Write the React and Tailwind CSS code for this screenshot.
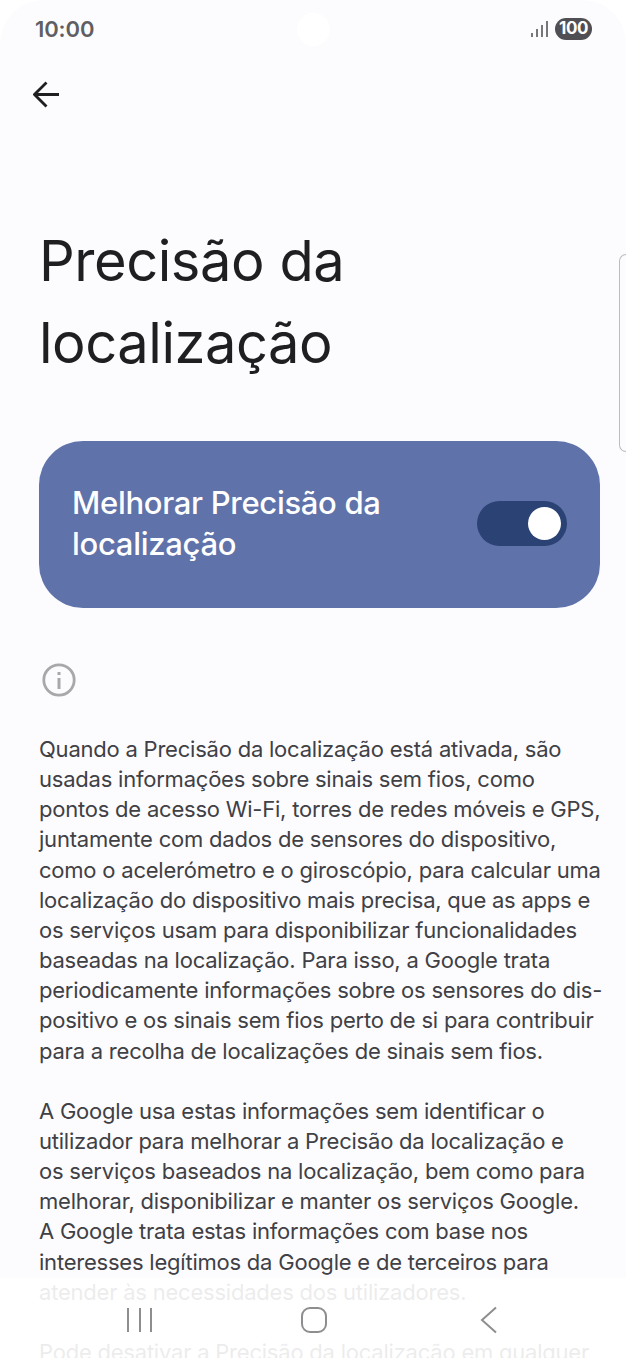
import React from 'react';

const para1 = [
  'Quando a Precisão da localização está ativada, são',
  'usadas informações sobre sinais sem fios, como',
  'pontos de acesso Wi-Fi, torres de redes móveis e GPS,',
  'juntamente com dados de sensores do dispositivo,',
  'como o acelerómetro e o giroscópio, para calcular uma',
  'localização do dispositivo mais precisa, que as apps e',
  'os serviços usam para disponibilizar funcionalidades',
  'baseadas na localização. Para isso, a Google trata',
  'periodicamente informações sobre os sensores do dis-',
  'positivo e os sinais sem fios perto de si para contribuir',
  'para a recolha de localizações de sinais sem fios.',
];

const para2 = [
  'A Google usa estas informações sem identificar o',
  'utilizador para melhorar a Precisão da localização e',
  'os serviços baseados na localização, bem como para',
  'melhorar, disponibilizar e manter os serviços Google.',
  'A Google trata estas informações com base nos',
  'interesses legítimos da Google e de terceiros para',
  'atender às necessidades dos utilizadores.',
];

const Paragraph = ({ lines }) => (
  <p className="mb-[30px] whitespace-nowrap">
    {lines.map((line) => (
      <span key={line} className="block">
        {line}
      </span>
    ))}
  </p>
);

export default function App() {
  return (
    <div className="relative h-[1358px] w-[626px] overflow-hidden bg-white font-['Inter',sans-serif]">
      <div className="h-full overflow-hidden rounded-t-[44px] bg-[#fcfcfe]">
        {/* Status bar */}
        <div className="relative flex h-[57px] items-center justify-between pl-[35px] pr-[34px] pt-[1px]">
          <span className="text-[22px] font-semibold tracking-[-0.1px] text-[#5f5f63]">10:00</span>
          <div className="absolute left-[297px] top-[13px] h-[33px] w-[33px] rounded-full bg-white" />
          <div className="flex items-center gap-[7px]">
            <svg width="17" height="16" viewBox="0 0 17 16" fill="#77777b">
              <rect x="0" y="12" width="2" height="4" />
              <rect x="5" y="8" width="2" height="8" />
              <rect x="10" y="4" width="2" height="12" />
              <rect x="15" y="0" width="2" height="16" />
            </svg>
            <span className="flex h-[22px] w-[37px] items-center justify-center rounded-full bg-[#505054] text-[17px] font-bold tracking-[-0.5px] text-white">
              100
            </span>
          </div>
        </div>

        {/* Back */}
        <div className="pl-[33px] pt-[24px]">
          <svg width="27" height="27" viewBox="0 0 27 27" fill="none" stroke="#1f1f22" strokeWidth="2.8">
            <path d="M26 13.5H2.5M13.5 1.5L1.5 13.5L13.5 25.5" />
          </svg>
        </div>

        {/* Title */}
        <h1 className="pl-[39px] pt-[112px] text-[56px] leading-[82px] font-normal tracking-[-0.45px] text-[#1f1f22]">
          Precisão da
          <br />
          localização
        </h1>

        {/* Toggle card */}
        <div className="ml-[39px] mt-[57px] flex h-[167px] w-[561px] items-center justify-between rounded-[44px] bg-[#5f72a9] pl-[33px] pr-[33px]">
          <span className="pb-[3px] text-[31px] leading-[41px] font-medium tracking-[-0.3px] text-white">
            Melhorar Precisão da
            <br />
            localização
          </span>
          <div className="mb-[2px] flex h-[45px] w-[90px] items-center justify-end rounded-full bg-[#2b4274] pr-[6px]">
            <div className="h-[33px] w-[33px] rounded-full bg-white" />
          </div>
        </div>

        {/* Info icon */}
        <div className="pl-[42px] pt-[55px]">
          <svg width="34" height="34" viewBox="0 0 34 34" fill="none">
            <circle cx="17" cy="17" r="15.2" stroke="#a8a8aa" strokeWidth="2.8" />
            <rect x="15.5" y="15" width="3" height="11" fill="#a8a8aa" />
            <rect x="15.5" y="9" width="3" height="3" fill="#a8a8aa" />
          </svg>
        </div>

        {/* Body */}
        <div className="pl-[39px] pt-[37px] text-[22px] leading-[30.15px] tracking-[-0.22px] text-[#404045]">
          <Paragraph lines={para1} />
          <Paragraph lines={para2} />
          <Paragraph lines={['Pode desativar a Precisão da localização em qualquer']} />
        </div>
      </div>

      {/* Scroll handle */}
      <div className="absolute right-0 top-[254px] h-[198px] w-[7px] rounded-l-[8px] border border-r-0 border-[#bcbcbe]" />

      {/* Navigation bar */}
      <div className="absolute bottom-0 left-0 h-[80px] w-full bg-white/90">
        <div className="absolute left-[127px] top-[30px] flex gap-[9.5px]">
          <span className="h-[24px] w-[2px] bg-[#8e8e90]" />
          <span className="h-[24px] w-[2px] bg-[#8e8e90]" />
          <span className="h-[24px] w-[2px] bg-[#8e8e90]" />
        </div>
        <div className="absolute left-[301px] top-[29px] h-[26px] w-[26px] rounded-[9px] border-2 border-[#8e8e90]" />
        <svg className="absolute left-[480px] top-[28px]" width="18" height="28" viewBox="0 0 18 28" fill="none" stroke="#8e8e90" strokeWidth="2">
          <path d="M16 1.5L2 14L16 26.5" />
        </svg>
      </div>
    </div>
  );
}
